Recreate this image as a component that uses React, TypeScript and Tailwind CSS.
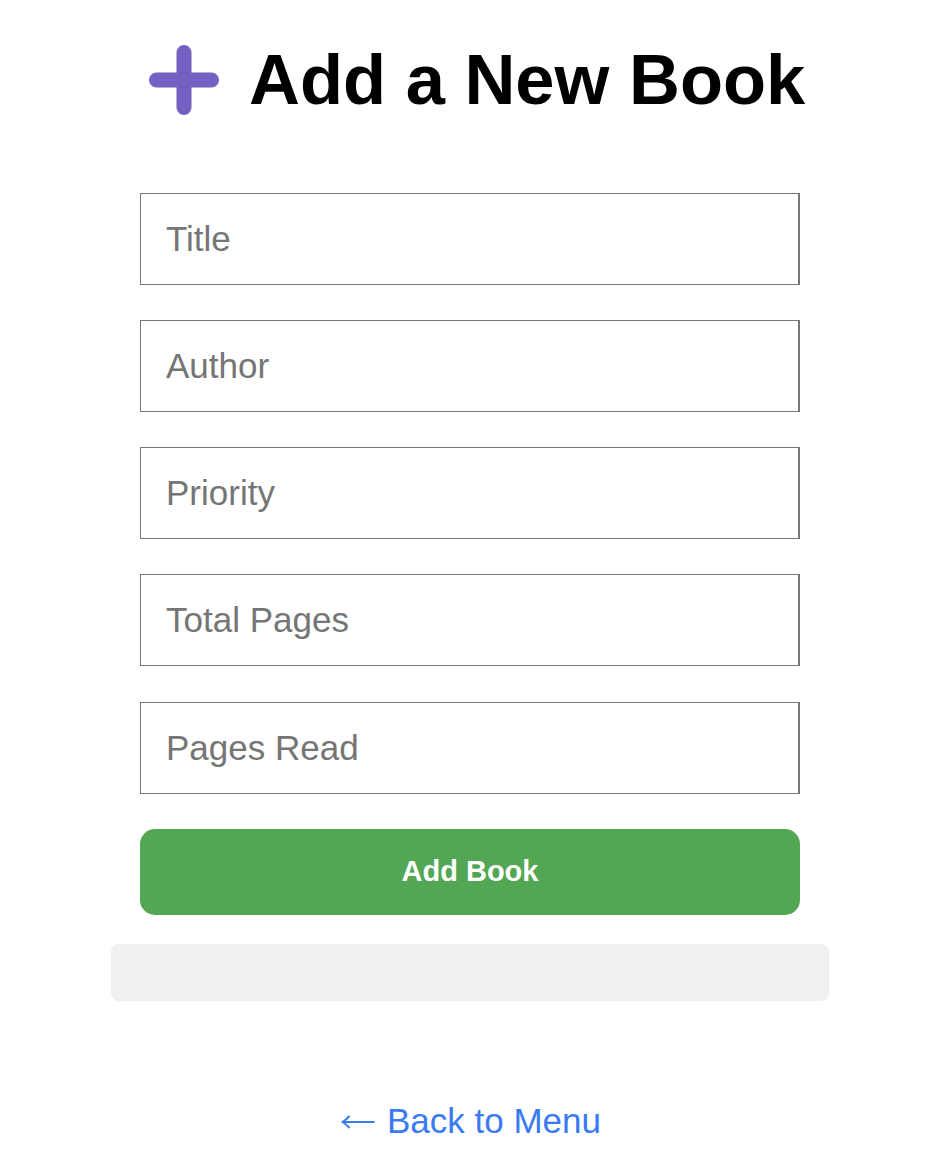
import { useState } from 'react';

const PlusIcon = () => (
  <svg width="70" height="70" viewBox="0 0 70 70" className="shrink-0">
    <path d="M35 7.5 V62.5 M7.5 35 H62.5" stroke="#7360c2" strokeWidth="15" strokeLinecap="round" />
  </svg>
);

const ArrowLeft = () => (
  <svg width="34" height="14" viewBox="0 0 34 14" className="shrink-0">
    <path d="M1.5 7 H33.5 M8.5 1 Q5 5 1.5 7 Q5 9 8.5 13" stroke="#3a7bf2" strokeWidth="2" fill="none" />
  </svg>
);

export default function App() {
  const [title, setTitle] = useState("");
  const [author, setAuthor] = useState("");
  const [priority, setPriority] = useState("");
  const [totalPages, setTotalPages] = useState("");
  const [pagesRead, setPagesRead] = useState("");

  const fields = [
    { name: "title", placeholder: "Title", value: title, set: setTitle },
    { name: "author", placeholder: "Author", value: author, set: setAuthor },
    { name: "priority", placeholder: "Priority", value: priority, set: setPriority },
    { name: "totalPages", placeholder: "Total Pages", value: totalPages, set: setTotalPages },
    { name: "pagesRead", placeholder: "Pages Read", value: pagesRead, set: setPagesRead },
  ];

  return (
    <div className="min-h-[1171px] bg-white font-['Liberation_Sans',Arial,sans-serif]">
      <div className="mx-auto w-[722px] pl-[4px] flex flex-col">
        <h1 className="flex items-center gap-[30px] pl-[38px] pt-[45px] text-[70.5px] leading-none font-bold text-black">
          <PlusIcon />
          <span>Add a New Book</span>
        </h1>

        <form
          onSubmit={e => e.preventDefault()}
          className="mt-[77px] px-[29px] flex flex-col gap-[35.25px]"
        >
          {fields.map(f => (
            <input
              key={f.name}
              name={f.name}
              type="text"
              placeholder={f.placeholder}
              value={f.value}
              onChange={e => f.set(e.target.value)}
              className="h-[92px] w-full border border-r-2 border-[#767676] bg-white px-[25px] text-[35px] text-black placeholder:text-[#757575] outline-none"
            />
          ))}
          <button
            type="submit"
            className="h-[86px] w-full rounded-[15px] bg-[#53a653] text-[29px] font-bold text-white"
          >
            Add Book
          </button>
        </form>

        <div className="mt-[29px] h-[57px] rounded-[8px] bg-[#f0f0f0]"></div>

        <div className="mt-[102px] flex justify-center pl-[2px]">
          <a href="#" className="flex items-center text-[35px] leading-none text-[#3a7bf2]">
            <span className="pt-[3px]"><ArrowLeft /></span>
            <span className="ml-[12px]">Back to Menu</span>
          </a>
        </div>
      </div>
    </div>
  );
}
